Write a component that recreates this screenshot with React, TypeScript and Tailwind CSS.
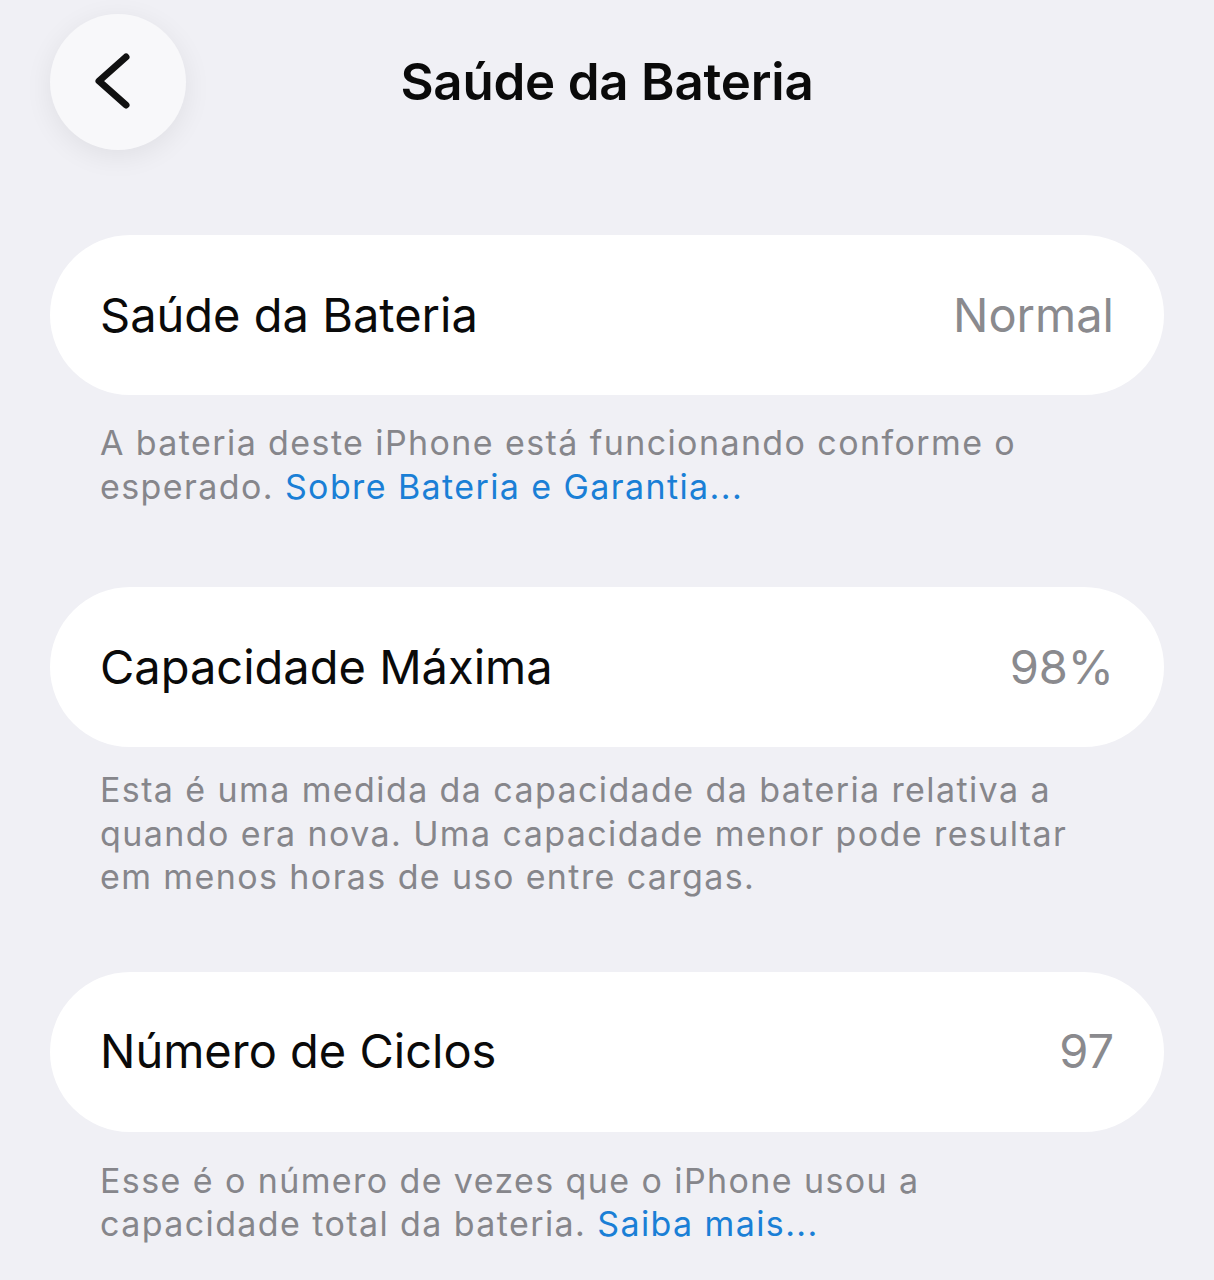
import React from 'react';

const rows = [
  {
    label: 'Saúde da Bateria',
    value: 'Normal',
    lines: ['A bateria deste iPhone está funcionando conforme o', 'esperado.'],
    link: 'Sobre Bateria e Garantia...',
    cardMt: 'mt-[85px]',
    noteMt: 'mt-[26px]',
  },
  {
    label: 'Capacidade Máxima',
    value: '98%',
    lines: [
      'Esta é uma medida da capacidade da bateria relativa a',
      'quando era nova. Uma capacidade menor pode resultar',
      'em menos horas de uso entre cargas.',
    ],
    link: '',
    cardMt: 'mt-[79px]',
    noteMt: 'mt-[21px]',
  },
  {
    label: 'Número de Ciclos',
    value: '97',
    lines: ['Esse é o número de vezes que o iPhone usou a', 'capacidade total da bateria.'],
    link: 'Saiba mais...',
    cardMt: 'mt-[73px]',
    noteMt: 'mt-[27px]',
  },
];

function BackButton() {
  return (
    <div className="flex h-[136px] w-[136px] items-center justify-center rounded-full bg-[#f8f8fa] shadow-[0_6px_28px_rgba(0,0,0,0.07)]">
      <svg width="136" height="136" viewBox="0 0 136 136" fill="none">
        <path
          d="M76 43 L49 67 L76 91"
          stroke="#111"
          strokeWidth="7"
          strokeLinecap="round"
          strokeLinejoin="round"
        />
      </svg>
    </div>
  );
}

export default function App() {
  return (
    <div className="min-h-[1280px] w-[1214px] bg-[#f0f0f5] font-['Inter',sans-serif] antialiased">
      <div className="grid grid-cols-[136px_1fr_136px] items-center px-[50px] pt-[14px]">
        <BackButton />
        <h1 className="text-center text-[51px] font-semibold tracking-[-0.2px] text-[#0a0a0a]">
          Saúde da Bateria
        </h1>
        <div />
      </div>

      {rows.map((row) => (
        <div key={row.label}>
          <div
            className={`${row.cardMt} mx-[50px] flex h-[160px] items-center justify-between rounded-full bg-white px-[50px]`}
          >
            <span className="text-[47px] tracking-[0px] text-[#0a0a0a]">{row.label}</span>
            <span className="text-[47px] tracking-[0px] text-[#8a8a8e]">{row.value}</span>
          </div>
          <p
            className={`${row.noteMt} px-[100px] text-[34px] leading-[43.5px] tracking-[1.4px] text-[#86868b]`}
          >
            {row.lines.map((line, i) => (
              <span key={i} className="block whitespace-nowrap">
                {line}
                {i === row.lines.length - 1 && row.link && (
                  <>
                    {' '}
                    <span className="text-[#1a7fd6]">{row.link}</span>
                  </>
                )}
              </span>
            ))}
          </p>
        </div>
      ))}
    </div>
  );
}
